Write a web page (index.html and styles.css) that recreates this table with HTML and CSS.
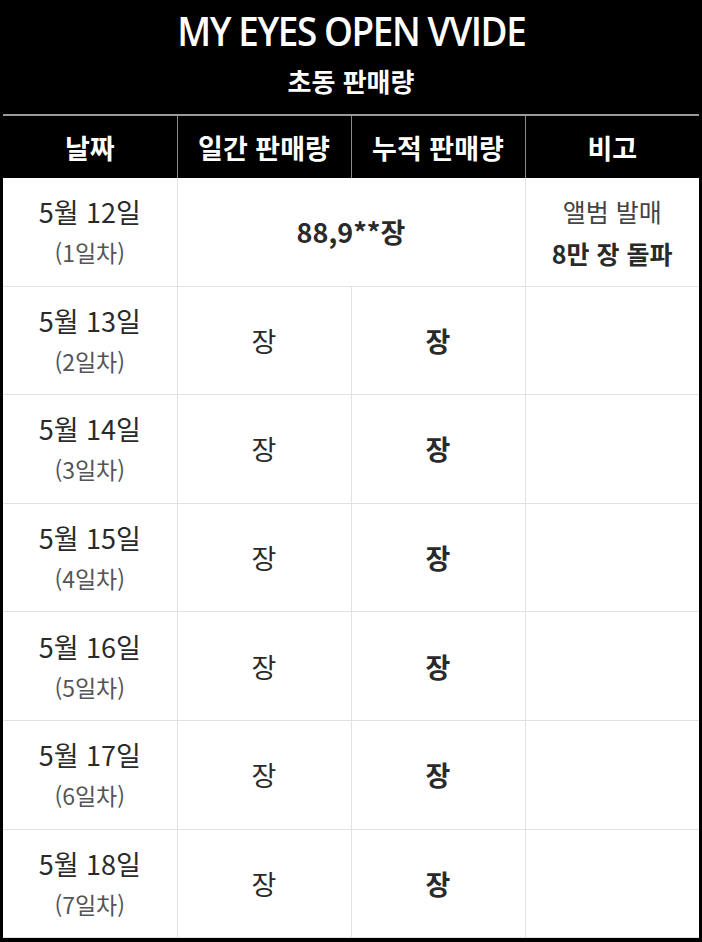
FILE: index.html
```html
<!DOCTYPE html>
<html lang="ko">
<head>
<meta charset="utf-8">
<link rel="stylesheet" href="styles.css">
</head>
<body>
<div class="page">
  <div class="titles">
    <div class="title">MY EYES OPEN VVIDE</div>
    <div class="subtitle">초동 판매량</div>
  </div>
  <table class="sales">
    <thead>
      <tr>
        <th>날짜</th>
        <th>일간 판매량</th>
        <th>누적 판매량</th>
        <th>비고</th>
      </tr>
    </thead>
    <tbody>
      <tr>
        <td><div class="date">5월 12일</div><div class="day">(1일차)</div></td>
        <td colspan="2" class="bold">88,9**장</td>
        <td><div class="note">앨범 발매</div><div class="note bold">8만 장 돌파</div></td>
      </tr>
      <tr>
        <td><div class="date">5월 13일</div><div class="day">(2일차)</div></td>
        <td>장</td><td class="bold">장</td><td></td>
      </tr>
      <tr>
        <td><div class="date">5월 14일</div><div class="day">(3일차)</div></td>
        <td>장</td><td class="bold">장</td><td></td>
      </tr>
      <tr>
        <td><div class="date">5월 15일</div><div class="day">(4일차)</div></td>
        <td>장</td><td class="bold">장</td><td></td>
      </tr>
      <tr>
        <td><div class="date">5월 16일</div><div class="day">(5일차)</div></td>
        <td>장</td><td class="bold">장</td><td></td>
      </tr>
      <tr>
        <td><div class="date">5월 17일</div><div class="day">(6일차)</div></td>
        <td>장</td><td class="bold">장</td><td></td>
      </tr>
      <tr>
        <td><div class="date">5월 18일</div><div class="day">(7일차)</div></td>
        <td>장</td><td class="bold">장</td><td></td>
      </tr>
    </tbody>
  </table>
</div>
</body>
</html>
```
FILE: styles.css
```css
html, body {
  margin: 0;
  padding: 0;
  background: #000;
}
body {
  font-family: "Noto Sans CJK KR", "Noto Sans", sans-serif;
  width: 702px;
  height: 942px;
  overflow: hidden;
}
.page {
  padding: 0 3px;
}
.titles {
  height: 114px;
  display: flex;
  flex-direction: column;
  align-items: center;
  color: #fff;
}
.title {
  margin-top: 7px;
  font-family: "Open Sans", "Noto Sans", sans-serif;
  font-size: 40px;
  line-height: 48px;
  letter-spacing: -1.5px;
  transform: scaleX(0.92);
  font-weight: 600;
}
.subtitle {
  margin-top: 8px;
  font-size: 26px;
  line-height: 36px;
  font-weight: 700;
}
.sales {
  width: 696px;
  border-collapse: collapse;
  table-layout: fixed;
}
.sales th {
  height: 62px;
  color: #fff;
  background: #000;
  font-size: 27px;
  font-weight: 700;
  border-top: 2px solid #9a9a9a;
  border-left: 1px solid #8a8a8a;
  padding: 0;
  text-align: center;
}
.sales th:first-child { border-left: none; }
.sales td {
  background: #fff;
  height: 107.6px;
  padding: 0;
  text-align: center;
  vertical-align: middle;
  border: 1px solid #e2e2e2;
  color: #2a2a2a;
  font-size: 27px;
}
.sales tbody tr:first-child td { border-top: none; }
.sales td:first-child { border-left: none; }
.sales td:last-child { border-right: none; }
.bold { font-weight: 700; }
.date {
  font-size: 27px;
  line-height: 38px;
  color: #2a2a2a;
}
.day {
  margin-top: 3px;
  font-size: 23px;
  line-height: 36px;
  color: #555;
}
.note {
  font-size: 25px;
  line-height: 42px;
  color: #444;
}
.note.bold { color: #2a2a2a; }
```
